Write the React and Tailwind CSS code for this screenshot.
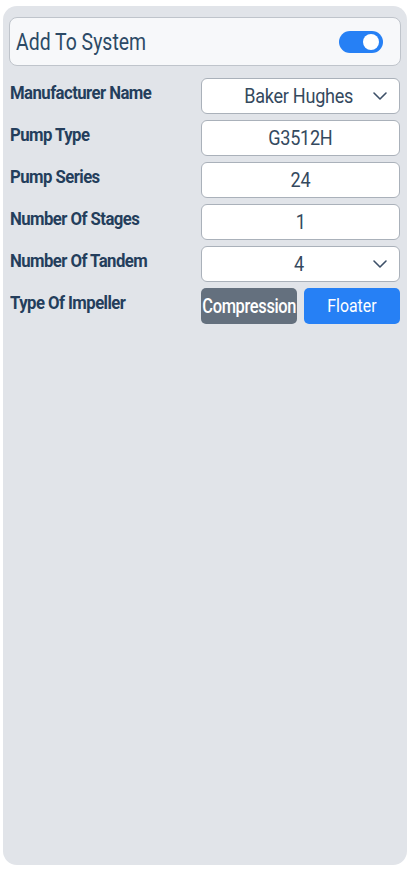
import React from "react";

const font = { fontFamily: 'Roboto, "DejaVu Sans Condensed", sans-serif' };

function Chevron() {
  return (
    <svg width="16" height="10" viewBox="0 0 16 10" className="absolute right-[11px] top-1/2 -translate-y-1/2">
      <path d="M2 2 L8 8 L14 2" fill="none" stroke="#3d5068" strokeWidth="1.6" strokeLinecap="round" strokeLinejoin="round" />
    </svg>
  );
}

function Field({ value, select }) {
  return (
    <div className="relative w-[199px] h-[36px] rounded-[6px] border border-[#aab1ba] bg-white flex items-center justify-center text-[21px] text-[#34495e] leading-none font-normal">
      <span className={"inline-block scale-x-[0.86] tracking-[-0.3px] " + (select ? "pr-[4px]" : "")}>{value}</span>
      {select && <Chevron />}
    </div>
  );
}

function Row({ label, children }) {
  return (
    <div className="flex items-start justify-between pl-[7px] pr-[7px]">
      <div className="pt-[4px] text-[18px] font-bold text-[#243e5c] tracking-[-0.6px] leading-[22px] whitespace-nowrap origin-left scale-x-[0.93]">{label}</div>
      {children}
    </div>
  );
}

export default function App() {
  return (
    <div className="w-[410px] h-[870px] bg-white pt-[6px] px-[3px]" style={font}>
      <div className="h-[859px] rounded-[14px] bg-[#e1e4e9] pt-[11px] flex flex-col">
        <div className="mx-[6px] h-[49px] rounded-[8px] border border-[#bfc4cb] bg-[#f7f8fa] flex items-center justify-between pl-[6px] pr-[17px]">
          <span className="inline-block origin-left scale-x-[0.81] text-[24px] text-[#2c4a66] leading-none">Add To System</span>
          <div className="w-[44px] h-[22px] rounded-full bg-[#2680f5] relative">
            <div className="absolute right-[4px] top-[3px] w-[16px] h-[16px] rounded-full bg-white" />
          </div>
        </div>
        <div className="mt-[12px] flex flex-col gap-[6px]">
          <Row label="Manufacturer Name"><Field value="Baker Hughes" select /></Row>
          <Row label="Pump Type"><Field value="G3512H" /></Row>
          <Row label="Pump Series"><Field value="24" /></Row>
          <Row label="Number Of Stages"><Field value="1" /></Row>
          <Row label="Number Of Tandem"><Field value="4" select /></Row>
          <Row label="Type Of Impeller">
            <div className="flex gap-[7px] w-[199px]">
              <button className="w-[96px] h-[36px] rounded-[5px] bg-[#64707e] text-white text-[20px] leading-none font-medium flex items-center justify-center">
                <span className="inline-block scale-x-[0.82] tracking-[-0.4px]">Compression</span>
              </button>
              <button className="w-[96px] h-[36px] rounded-[5px] bg-[#2680f5] text-white text-[18px] leading-none flex items-center justify-center">
                <span className="inline-block scale-x-[0.88]">Floater</span>
              </button>
            </div>
          </Row>
        </div>
      </div>
    </div>
  );
}
